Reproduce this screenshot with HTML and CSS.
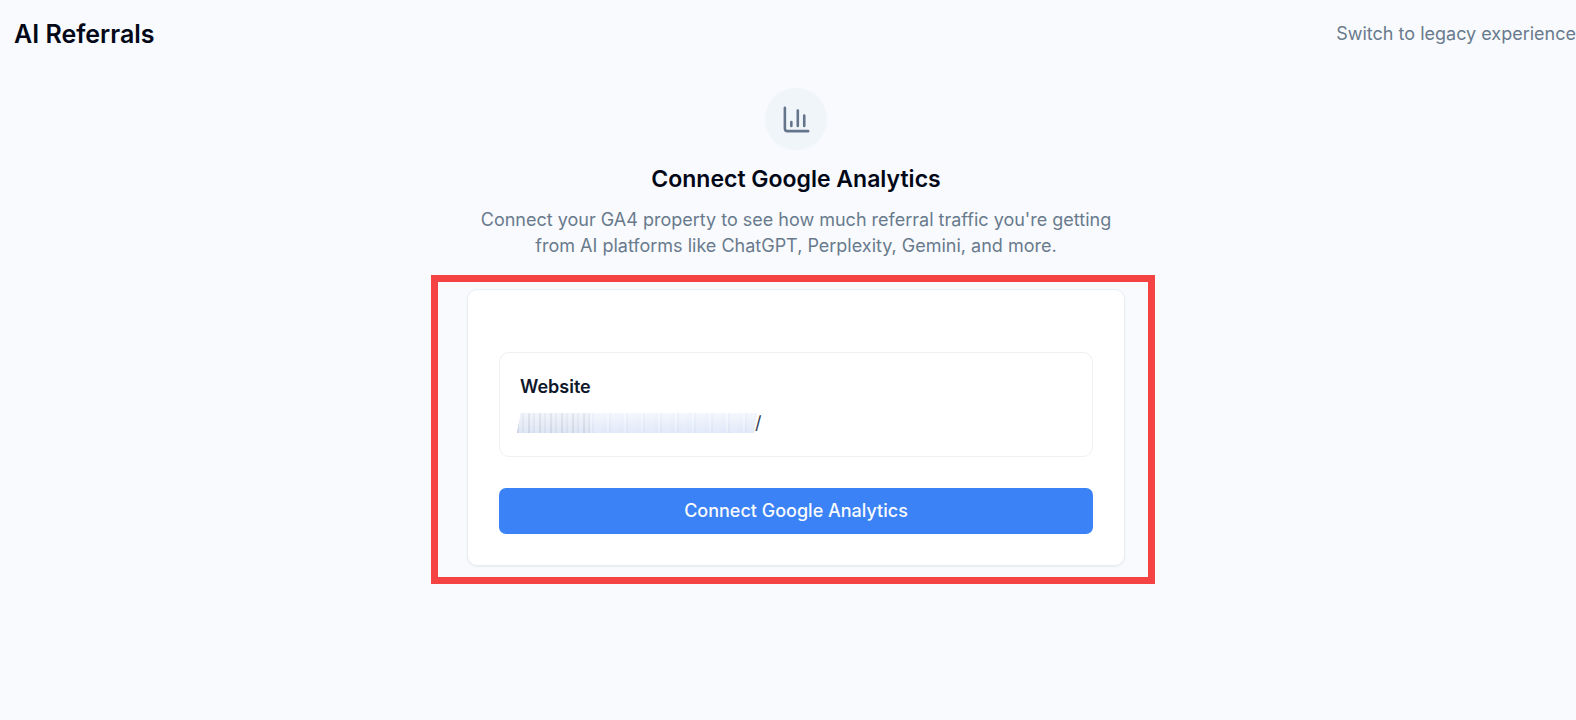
FILE: index.html
```html
<!DOCTYPE html>
<html lang="en">
<head>
<meta charset="utf-8">
<meta name="viewport" content="width=device-width, initial-scale=1">
<title>AI Referrals</title>
<link rel="stylesheet" href="styles.css">
</head>
<body>
<header class="topbar">
  <h1 class="page-title">AI Referrals</h1>
  <a class="legacy-link" href="#">Switch to legacy experience</a>
</header>
<main class="content">
  <section class="intro">
    <div class="icon-badge">
      <svg class="icon" viewBox="0 0 24 24" fill="none" stroke="currentColor" stroke-width="2" stroke-linecap="round" stroke-linejoin="round" aria-hidden="true">
        <path d="M3 3v16a2 2 0 0 0 2 2h16"/>
        <path d="M18 17V9"/>
        <path d="M13 17V5"/>
        <path d="M8 17v-3"/>
      </svg>
    </div>
    <h2 class="intro-title">Connect Google Analytics</h2>
    <p class="intro-text">Connect your GA4 property to see how much referral traffic you're getting from AI platforms like ChatGPT, Perplexity, Gemini, and more.</p>
  </section>
  <section class="card">
    <div class="website">
      <h3 class="website-label">Website</h3>
      <div class="website-url"><span class="redacted"></span><span>/</span></div>
    </div>
    <button class="connect" type="button">Connect Google Analytics</button>
  </section>
</main>
</body>
</html>
```
FILE: styles.css
```css
* {
  box-sizing: border-box;
}

body {
  margin: 0;
  min-height: 100vh;
  background: #f8fafd;
  color: #020817;
  font-family: Inter, "Liberation Sans", sans-serif;
  font-size: 18px;
  line-height: 26px;
}

h1, h2, h3, p {
  margin: 0;
}

.topbar {
  display: flex;
  align-items: center;
  justify-content: space-between;
  padding: 16px 0 0 14px;
}

.page-title {
  font-size: 25px;
  font-weight: 600;
  line-height: 36px;
}

.legacy-link {
  color: #697a8d;
  text-decoration: none;
  white-space: nowrap;
}

.content {
  display: flex;
  flex-direction: column;
  align-items: center;
  gap: 30px;
  padding: 36px 0 36px 16px;
}

.intro {
  display: flex;
  flex-direction: column;
  align-items: center;
  width: 100%;
  max-width: 658px;
  text-align: center;
}

.icon-badge {
  display: grid;
  place-items: center;
  width: 62px;
  height: 62px;
  border-radius: 50%;
  background: #f0f5f9;
  color: #64748b;
}

.icon {
  width: 31px;
  height: 31px;
}

.intro-title {
  margin: 13px 0 12px;
  font-size: 23px;
  font-weight: 600;
  line-height: 32px;
}

.intro-text {
  color: #697a8d;
}

.card {
  position: relative;
  width: 100%;
  max-width: 658px;
  padding: 62px 31px 31px;
  border: 1px solid #e8edf3;
  border-radius: 10px;
  background: #fff;
  box-shadow: 0 1px 2px rgba(15, 23, 42, 0.06);
}

/* Highlight frame drawn round the card */
.card::after {
  content: "";
  position: absolute;
  inset: -15px -31px -19px -37px;
  border: 7px solid #f54343;
  pointer-events: none;
}

.website {
  padding: 21px 20px 20px;
  border: 1px solid #edeff3;
  border-radius: 10px;
}

.website-label {
  color: #0f172a;
  font-size: 18px;
  font-weight: 600;
}

.website-url {
  display: flex;
  align-items: center;
  margin-top: 10px;
  color: #334155;
}

.redacted {
  width: 240px;
  height: 20px;
  margin: 0 -2px 0 -3px;
  clip-path: polygon(4px 0, 100% 0, 237px 100%, 0 100%);
  background:
    linear-gradient(rgba(255, 255, 255, 0.6), rgba(224, 232, 248, 0.5)),
    repeating-linear-gradient(90deg, #b9c1d2 0 2px, #dde3ef 2px 5px, #c9d1e2 5px 7px, #dfe5f1 7px 11px) 0 0 / 74px 100% no-repeat,
    repeating-linear-gradient(90deg, #dfe8f9 0 5px, #edf2fc 5px 7px, #d6e0f3 7px 9px, #e4ebf9 9px 17px);
}

.connect {
  display: block;
  width: 100%;
  margin-top: 31px;
  padding: 10px 16px;
  border: 0;
  border-radius: 7px;
  background: #3b82f6;
  color: #f8fafc;
  font: inherit;
  font-weight: 500;
  cursor: pointer;
}
```
